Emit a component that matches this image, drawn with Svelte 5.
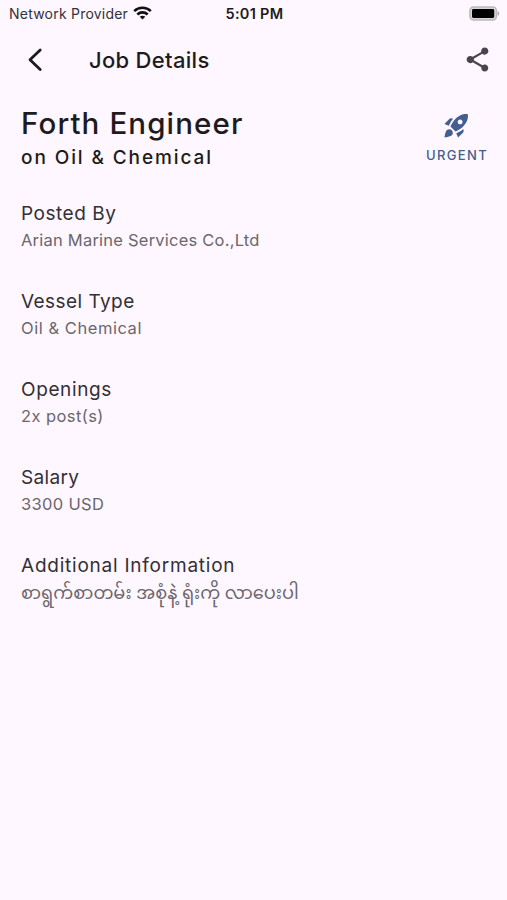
<script lang="ts">
  type Detail = { label: string; value: string; labelSpacing: number; valueSpacing: number; burmese?: boolean };

  let details: Detail[] = [
    { label: 'Posted By', value: 'Arian Marine Services Co.,Ltd', labelSpacing: 0.52, valueSpacing: 0.22 },
    { label: 'Vessel Type', value: 'Oil & Chemical', labelSpacing: 0.45, valueSpacing: 0.55 },
    { label: 'Openings', value: '2x post(s)', labelSpacing: 0.62, valueSpacing: 0.42 },
    { label: 'Salary', value: '3300 USD', labelSpacing: 0.35, valueSpacing: 0.33 },
    { label: 'Additional Information', value: 'စာရွက်စာတမ်း အစုံနဲ့ ရုံးကို လာပေးပါ', labelSpacing: 0.77, valueSpacing: 0, burmese: true },
  ];
</script>

<div class="screen">
  <div class="status-bar">
    <div class="carrier">
      <span>Network Provider</span>
      <svg class="wifi" viewBox="0 0 19 14" width="19" height="14" fill="none" stroke="#111" stroke-width="2.6">
        <path d="M1.2 5.1C5.8.6 13.2.6 17.8 5.1" />
        <path d="M4.3 8.5c2.9-2.8 7.5-2.8 10.4 0" />
        <path d="M9.5 13.6 6.7 10.7c1.6-1.4 4-1.4 5.6 0z" fill="#111" stroke="none" />
      </svg>
    </div>
    <span class="time">5:01 PM</span>
    <svg class="battery" viewBox="0 0 31 15" width="31" height="15">
      <rect x="0.9" y="0.9" width="26.6" height="13.2" rx="3.8" fill="#d9d3da" stroke="#bdb8be" stroke-width="1.5" />
      <rect x="3" y="3.1" width="22.2" height="8.8" rx="1.4" fill="#000" />
      <path d="M28.7 5.2c2 .6 2 4 0 4.6z" fill="#aaa5ab" />
    </svg>
  </div>

  <header>
    <svg class="back" viewBox="0 0 16 26" width="16" height="26" fill="none" stroke="#1c1b1f" stroke-width="2.8" stroke-linecap="round" stroke-linejoin="round">
      <path d="M13.2 3 3 12.8l10.2 9.8" />
    </svg>
    <h1>Job Details</h1>
    <svg class="share" viewBox="0 0 24 24" width="29" height="29" fill="#49454f">
      <path d="M18 16.08c-.76 0-1.44.3-1.96.77L8.91 12.7c.05-.23.09-.46.09-.7s-.04-.47-.09-.7l7.05-4.11c.54.5 1.25.81 2.04.81 1.66 0 3-1.34 3-3s-1.34-3-3-3-3 1.34-3 3c0 .24.04.47.09.7L8.04 9.81C7.5 9.31 6.79 9 6 9c-1.66 0-3 1.34-3 3s1.34 3 3 3c.79 0 1.5-.31 2.04-.81l7.12 4.16c-.05.21-.08.43-.08.65 0 1.61 1.31 2.92 2.92 2.92s2.92-1.31 2.92-2.92-1.31-2.92-2.92-2.92z" />
    </svg>
  </header>

  <main>
    <div class="job">
      <div>
        <h2>Forth Engineer</h2>
        <p class="vessel">on Oil &amp; Chemical</p>
      </div>
      <div class="urgent">
        <svg viewBox="0 0 24 24" width="29" height="29" fill="#435e91">
          <path d="M9.19 6.35c-2.04 2.29-3.44 5.58-3.57 5.89L2 10.69l4.05-4.05c.47-.47 1.15-.68 1.81-.55l1.33.26zM11.17 17s3.74-1.55 5.89-3.7c5.4-5.4 4.5-9.62 4.21-10.57-.95-.3-5.17-1.19-10.57 4.21C8.55 9.09 7 12.83 7 12.83L11.17 17zm6.48-2.19c-2.29 2.04-5.58 3.44-5.89 3.57L13.31 22l4.05-4.05c.47-.47.68-1.15.55-1.81l-.26-1.33zM9 18c0 .83-.34 1.58-.88 2.12C6.94 21.3 2 22 2 22s.7-4.94 1.88-6.12C4.42 15.34 5.17 15 6 15c1.66 0 3 1.34 3 3zm4-9c0-1.1.9-2 2-2s2 .9 2 2-.9 2-2 2-2-.9-2-2z" />
        </svg>
        <span>URGENT</span>
      </div>
    </div>

    <dl>
      {#each details as detail}
        <div class="detail">
          <dt style="letter-spacing: {detail.labelSpacing}px">{detail.label}</dt>
          <dd class:burmese={detail.burmese} style="letter-spacing: {detail.valueSpacing}px">{detail.value}</dd>
        </div>
      {/each}
    </dl>
  </main>
</div>

<style>
  :global(body) {
    margin: 0;
    background: #fef7ff;
  }

  .screen {
    min-height: 900px;
    box-sizing: border-box;
    background: #fef7ff;
    color: #1d1b20;
    font-family: Inter, sans-serif;
  }

  h1, h2, p, dl, dd {
    margin: 0;
    white-space: nowrap;
  }

  svg {
    display: block;
  }

  .status-bar {
    display: grid;
    grid-template-columns: 1fr auto 1fr;
    align-items: center;
    height: 27px;
    padding: 0 7px 0 9px;
    font-size: 14px;
    line-height: 27px;
  }

  .carrier {
    display: flex;
    align-items: center;
    gap: 5px;
    color: #333136;
    letter-spacing: 0.22px;
    white-space: nowrap;
  }

  .wifi {
    margin-top: -2px;
  }

  .time {
    font-size: 14.5px;
    font-weight: 600;
    letter-spacing: 0.3px;
  }

  .battery {
    justify-self: end;
    margin-top: -1px;
  }

  header {
    display: flex;
    align-items: center;
    height: 66px;
    padding: 0 15px 0 27px;
  }

  .share {
    margin-top: -1px;
  }

  h1 {
    flex: 1;
    margin-left: 46px;
    font-size: 22px;
    font-weight: 500;
    line-height: 30px;
    letter-spacing: 0.3px;
  }

  main {
    padding: 12px 19px 0 21px;
  }

  .job {
    display: flex;
    justify-content: space-between;
  }

  h2 {
    font-size: 29.5px;
    font-weight: 500;
    line-height: 36px;
    letter-spacing: 1.12px;
  }

  .vessel {
    padding-top: 1px;
    font-size: 19px;
    font-weight: 500;
    line-height: 31px;
    letter-spacing: 1.9px;
  }

  .urgent {
    display: flex;
    flex-direction: column;
    align-items: center;
    padding-top: 6px;
    color: #435e91;
    font-size: 13px;
    font-weight: 500;
    line-height: 30px;
    letter-spacing: 1.35px;
  }

  dl {
    margin-top: 26px;
  }

  .detail {
    height: 88px;
  }

  dt {
    width: max-content;
    color: #323036;
    font-size: 19px;
    line-height: 30px;
  }

  dd {
    width: max-content;
    margin-top: -1px;
    color: #6a676d;
    font-size: 16.5px;
    line-height: 25px;
  }

  .burmese {
    font-family: "Noto Sans Myanmar", Inter, sans-serif;
    font-size: 17.8px;
    line-height: 30px;
  }
</style>
